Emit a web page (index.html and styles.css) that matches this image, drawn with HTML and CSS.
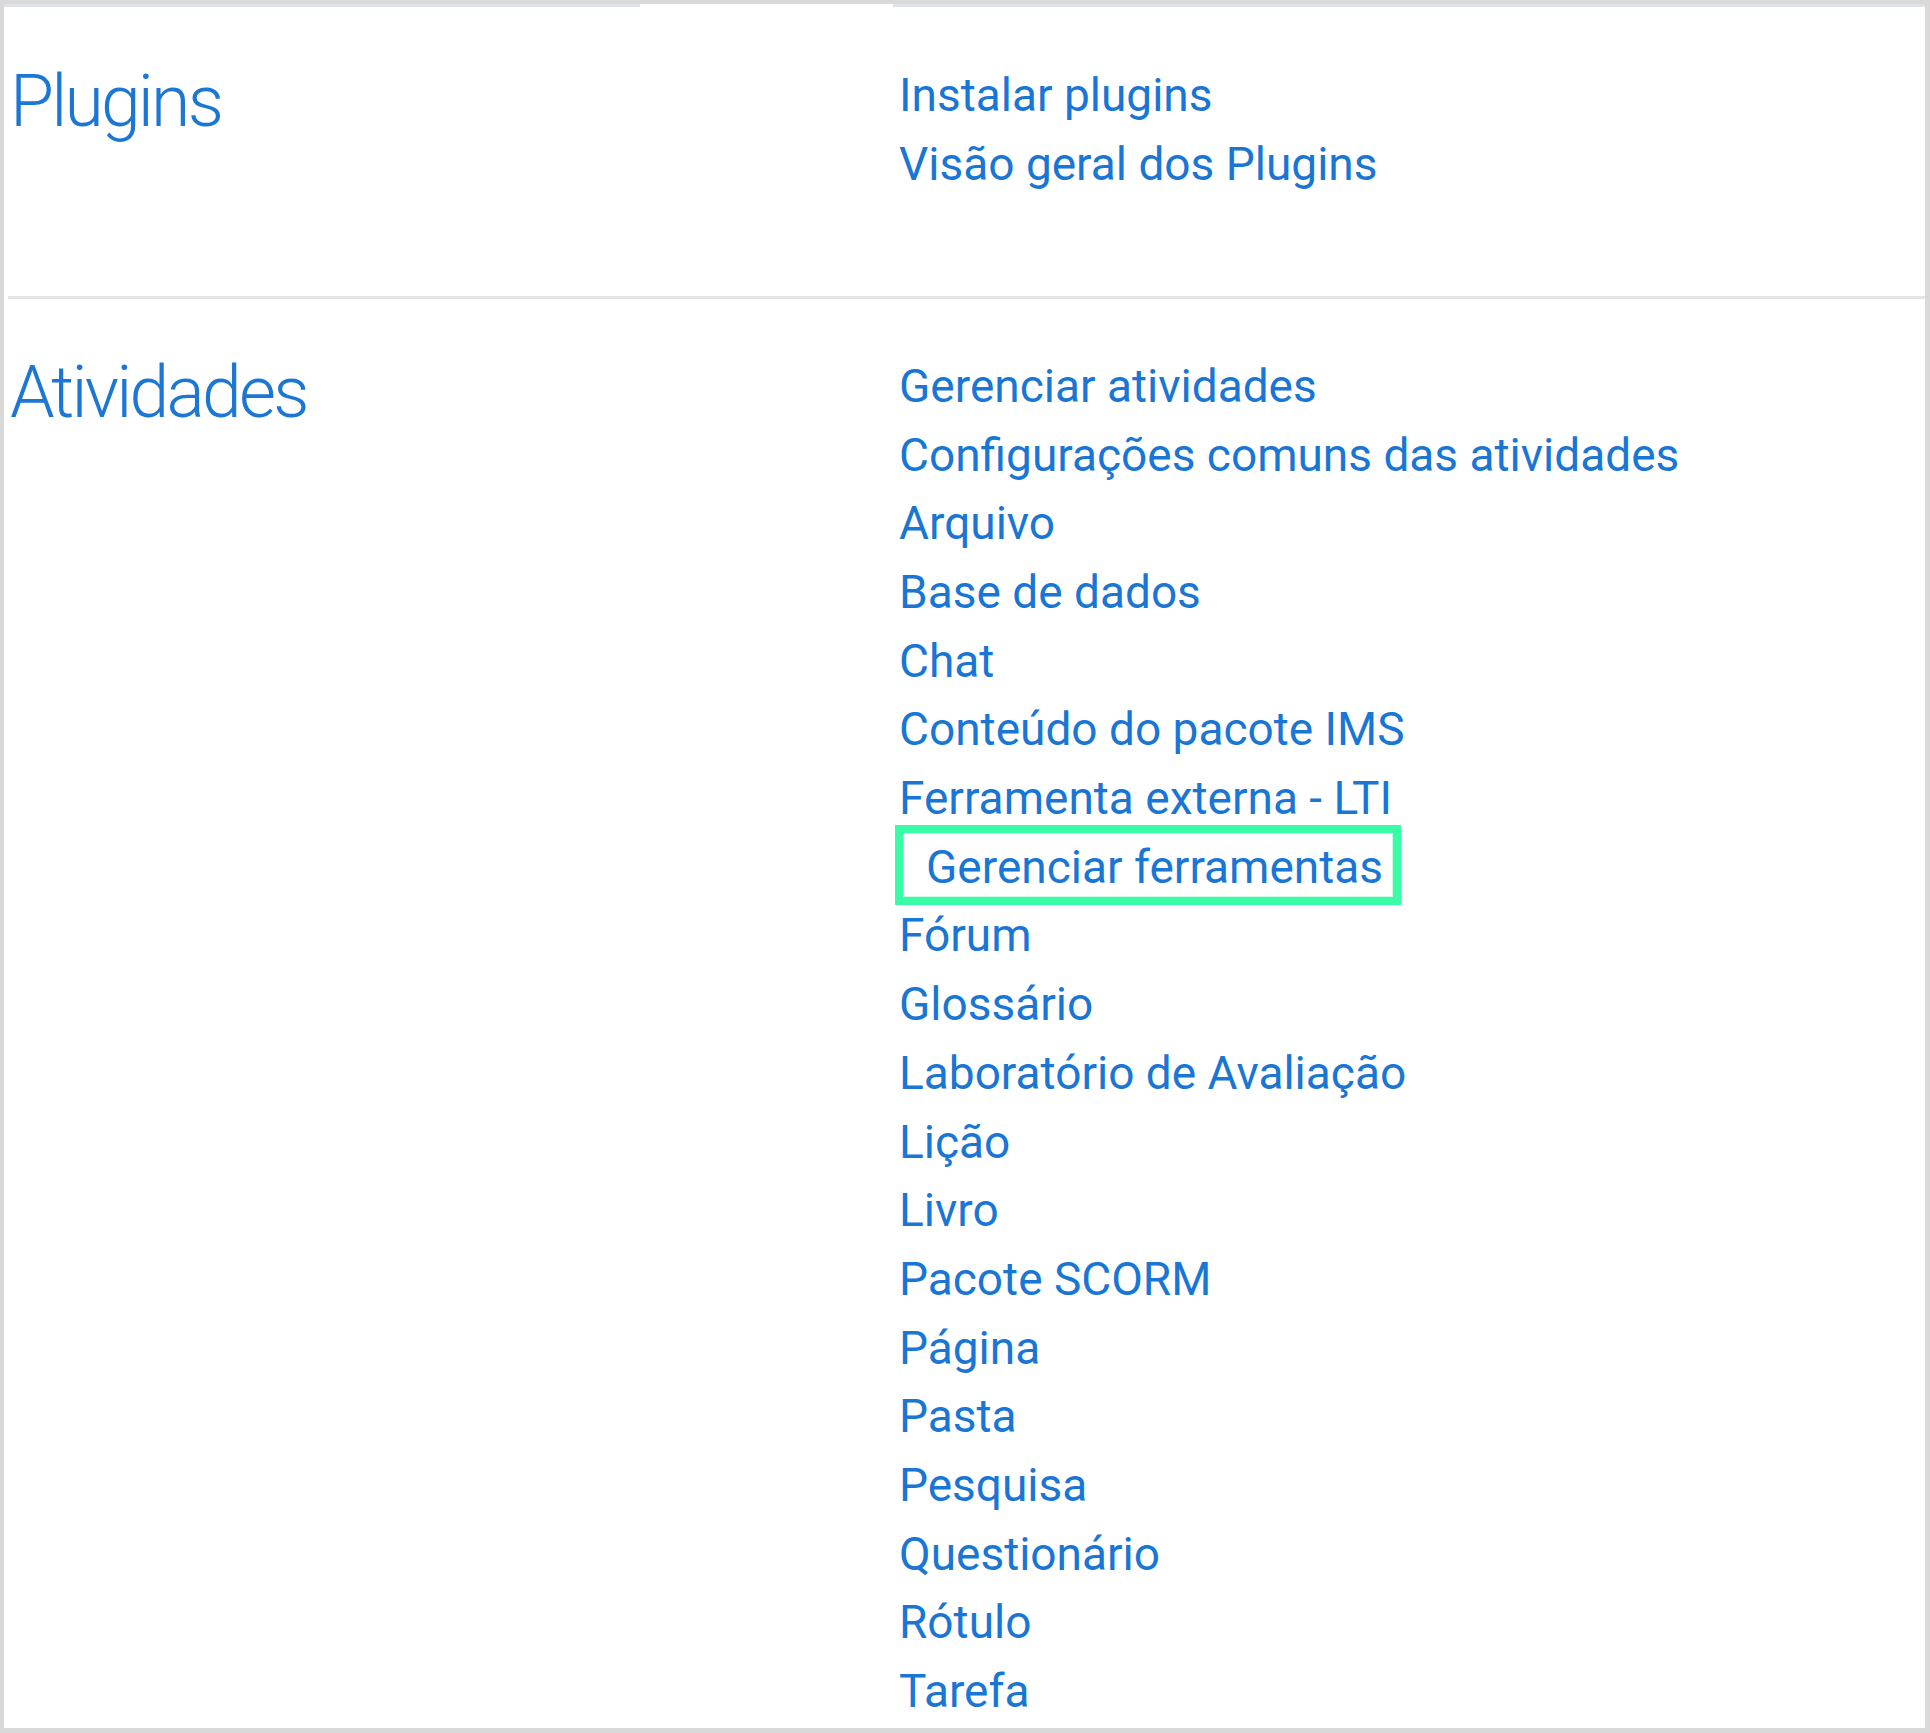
FILE: index.html
```html
<!DOCTYPE html>
<html lang="pt-BR">
<head>
<meta charset="utf-8">
<title>Plugins</title>
<link rel="stylesheet" href="styles.css">
</head>
<body>
<div class="frame">
  <div class="tab-edge">
    <span class="edge-left"></span>
    <span class="edge-gap"></span>
    <span class="edge-right"></span>
  </div>

  <section class="admin-row row-first">
    <h2 class="row-title">Plugins</h2>
    <ul class="link-list">
      <li><a href="#">Instalar plugins</a></li>
      <li><a href="#">Visão geral dos Plugins</a></li>
    </ul>
  </section>

  <section class="admin-row row-next">
    <h2 class="row-title">Atividades</h2>
    <ul class="link-list">
      <li><a href="#">Gerenciar atividades</a></li>
      <li><a href="#">Configurações comuns das atividades</a></li>
      <li><a href="#">Arquivo</a></li>
      <li><a href="#">Base de dados</a></li>
      <li><a href="#">Chat</a></li>
      <li><a href="#">Conteúdo do pacote IMS</a></li>
      <li><a href="#">Ferramenta externa - LTI</a></li>
      <li class="sub-item"><span class="highlight"></span><a href="#">Gerenciar ferramentas</a></li>
      <li><a href="#">Fórum</a></li>
      <li><a href="#">Glossário</a></li>
      <li><a href="#">Laboratório de Avaliação</a></li>
      <li><a href="#">Lição</a></li>
      <li><a href="#">Livro</a></li>
      <li><a href="#">Pacote SCORM</a></li>
      <li><a href="#">Página</a></li>
      <li><a href="#">Pasta</a></li>
      <li><a href="#">Pesquisa</a></li>
      <li><a href="#">Questionário</a></li>
      <li><a href="#">Rótulo</a></li>
      <li><a href="#">Tarefa</a></li>
    </ul>
  </section>
</div>
</body>
</html>
```
FILE: styles.css
```css
html, body {
  margin: 0;
  padding: 0;
  background: #ffffff;
}

body {
  font-family: Roboto, "Liberation Sans", sans-serif;
  color: #1874d2;
}

.frame {
  box-sizing: border-box;
  width: 1930px;
  height: 1733px;
  overflow: hidden;
  background: #ffffff;
  border-style: solid;
  border-color: #d9d9d9;
  border-width: 4px 5px 5px 4px;
}

.tab-edge {
  display: flex;
  height: 3px;
}

.edge-left {
  width: 636px;
  background: #dee2e6;
}

.edge-gap {
  width: 253px;
  background: #ffffff;
}

.edge-right {
  flex: 1;
  background: #dee2e6;
}

.admin-row {
  display: grid;
  grid-template-columns: 891px 1fr;
  margin-left: 4px;
}

.row-first {
  padding: 54px 0 97.6px;
}

.row-next {
  border-top: 3px solid #e5e5e5;
  padding-top: 53px;
}

.row-title {
  margin: -2px 0 0;
  padding-left: 2px;
  font-size: 71.5px;
  font-weight: 300;
  line-height: 1.2;
  letter-spacing: -2.8px;
  color: #1b76d4;
}

.link-list {
  list-style: none;
  margin: 0;
  padding: 0;
  font-size: 46px;
  line-height: 68.68px;
}

.link-list li {
  position: relative;
  white-space: nowrap;
}

.link-list a {
  color: #1976d4;
  text-decoration: none;
}

.sub-item {
  padding-left: 27px;
}

.highlight {
  position: absolute;
  left: -4px;
  top: -8px;
  width: 506px;
  height: 80px;
  box-sizing: border-box;
  border: 8px solid #38fca6;
  box-shadow: inset 0 0 0 1px #c9fbe3;
  pointer-events: none;
}
```
